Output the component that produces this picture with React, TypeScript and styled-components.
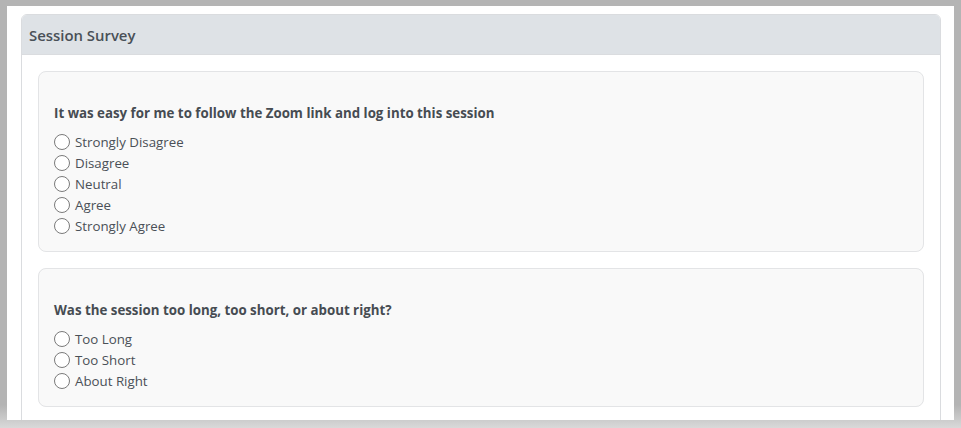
import React from "react";
import styled, { createGlobalStyle } from "styled-components";

const GlobalStyle = createGlobalStyle`
  html, body {
    margin: 0;
    padding: 0;
    height: 100%;
    overflow: hidden;
  }
  body {
    background: linear-gradient(#b4b4b4 0, #b4b4b4 405px, #d9d9d9 428px);
    font-family: "Open Sans", "Liberation Sans", sans-serif;
  }
`;

const Page = styled.div`
  margin: 6px 7px 0 7px;
  height: 414px;
  background: #fff;
  padding: 8px 13px 0 14px;
  box-sizing: border-box;
  overflow: hidden;
`;

const Card = styled.section`
  border: 1px solid #dadcdf;
  border-radius: 6px;
  background: #fff;
  min-height: 440px;
  overflow: hidden;
`;

const CardHeader = styled.header`
  height: 39px;
  display: flex;
  align-items: center;
  padding: 0 7px;
  background: #dee2e6;
  border-bottom: 1px solid #dadcdf;
  color: #495057;
  font-size: 14.9px;
  font-weight: 600;
`;

const CardBody = styled.div`
  padding: 16px 16px;
  display: flex;
  flex-direction: column;
  gap: 16px;
`;

const Question = styled.fieldset`
  margin: 0;
  border: 1px solid #e3e4e6;
  border-radius: 8px;
  background: #f9f9f9;
  padding: 32px 15px 15px 15px;
`;

const Prompt = styled.legend`
  float: left;
  width: 100%;
  padding: 0;
  margin: 0 0 8px 0;
  font-size: 13.3px;
  font-weight: 700;
  line-height: 19px;
  color: #464c52;
`;

const Options = styled.div`
  clear: both;
  display: flex;
  flex-direction: column;
`;

const Option = styled.label`
  display: flex;
  align-items: center;
  gap: 5px;
  height: 21px;
  font-size: 13.3px;
  color: #4a5057;
  cursor: pointer;
`;

const Radio = styled.input.attrs({ type: "radio" })`
  appearance: none;
  margin: 0;
  width: 16px;
  height: 16px;
  border: 1px solid #7a7a7a;
  border-radius: 50%;
  background: #fff;
  box-sizing: border-box;
  flex-shrink: 0;
  &:checked {
    background: radial-gradient(#0d6efd 0 4px, #fff 4.5px);
    border-color: #0d6efd;
  }
`;

const questions = [
  {
    id: "zoom",
    text: "It was easy for me to follow the Zoom link and log into this session",
    options: ["Strongly Disagree", "Disagree", "Neutral", "Agree", "Strongly Agree"],
  },
  {
    id: "length",
    text: "Was the session too long, too short, or about right?",
    options: ["Too Long", "Too Short", "About Right"],
  },
];

const App: React.FC = () => {
  return (
    <>
      <GlobalStyle />
      <Page>
        <Card>
          <CardHeader>Session Survey</CardHeader>
          <CardBody>
            {questions.map((q) => (
              <Question key={q.id}>
                <Prompt>{q.text}</Prompt>
                <Options>
                  {q.options.map((o) => (
                    <Option key={o}>
                      <Radio name={q.id} value={o} />
                      {o}
                    </Option>
                  ))}
                </Options>
              </Question>
            ))}
          </CardBody>
        </Card>
      </Page>
    </>
  );
};

export default App;
